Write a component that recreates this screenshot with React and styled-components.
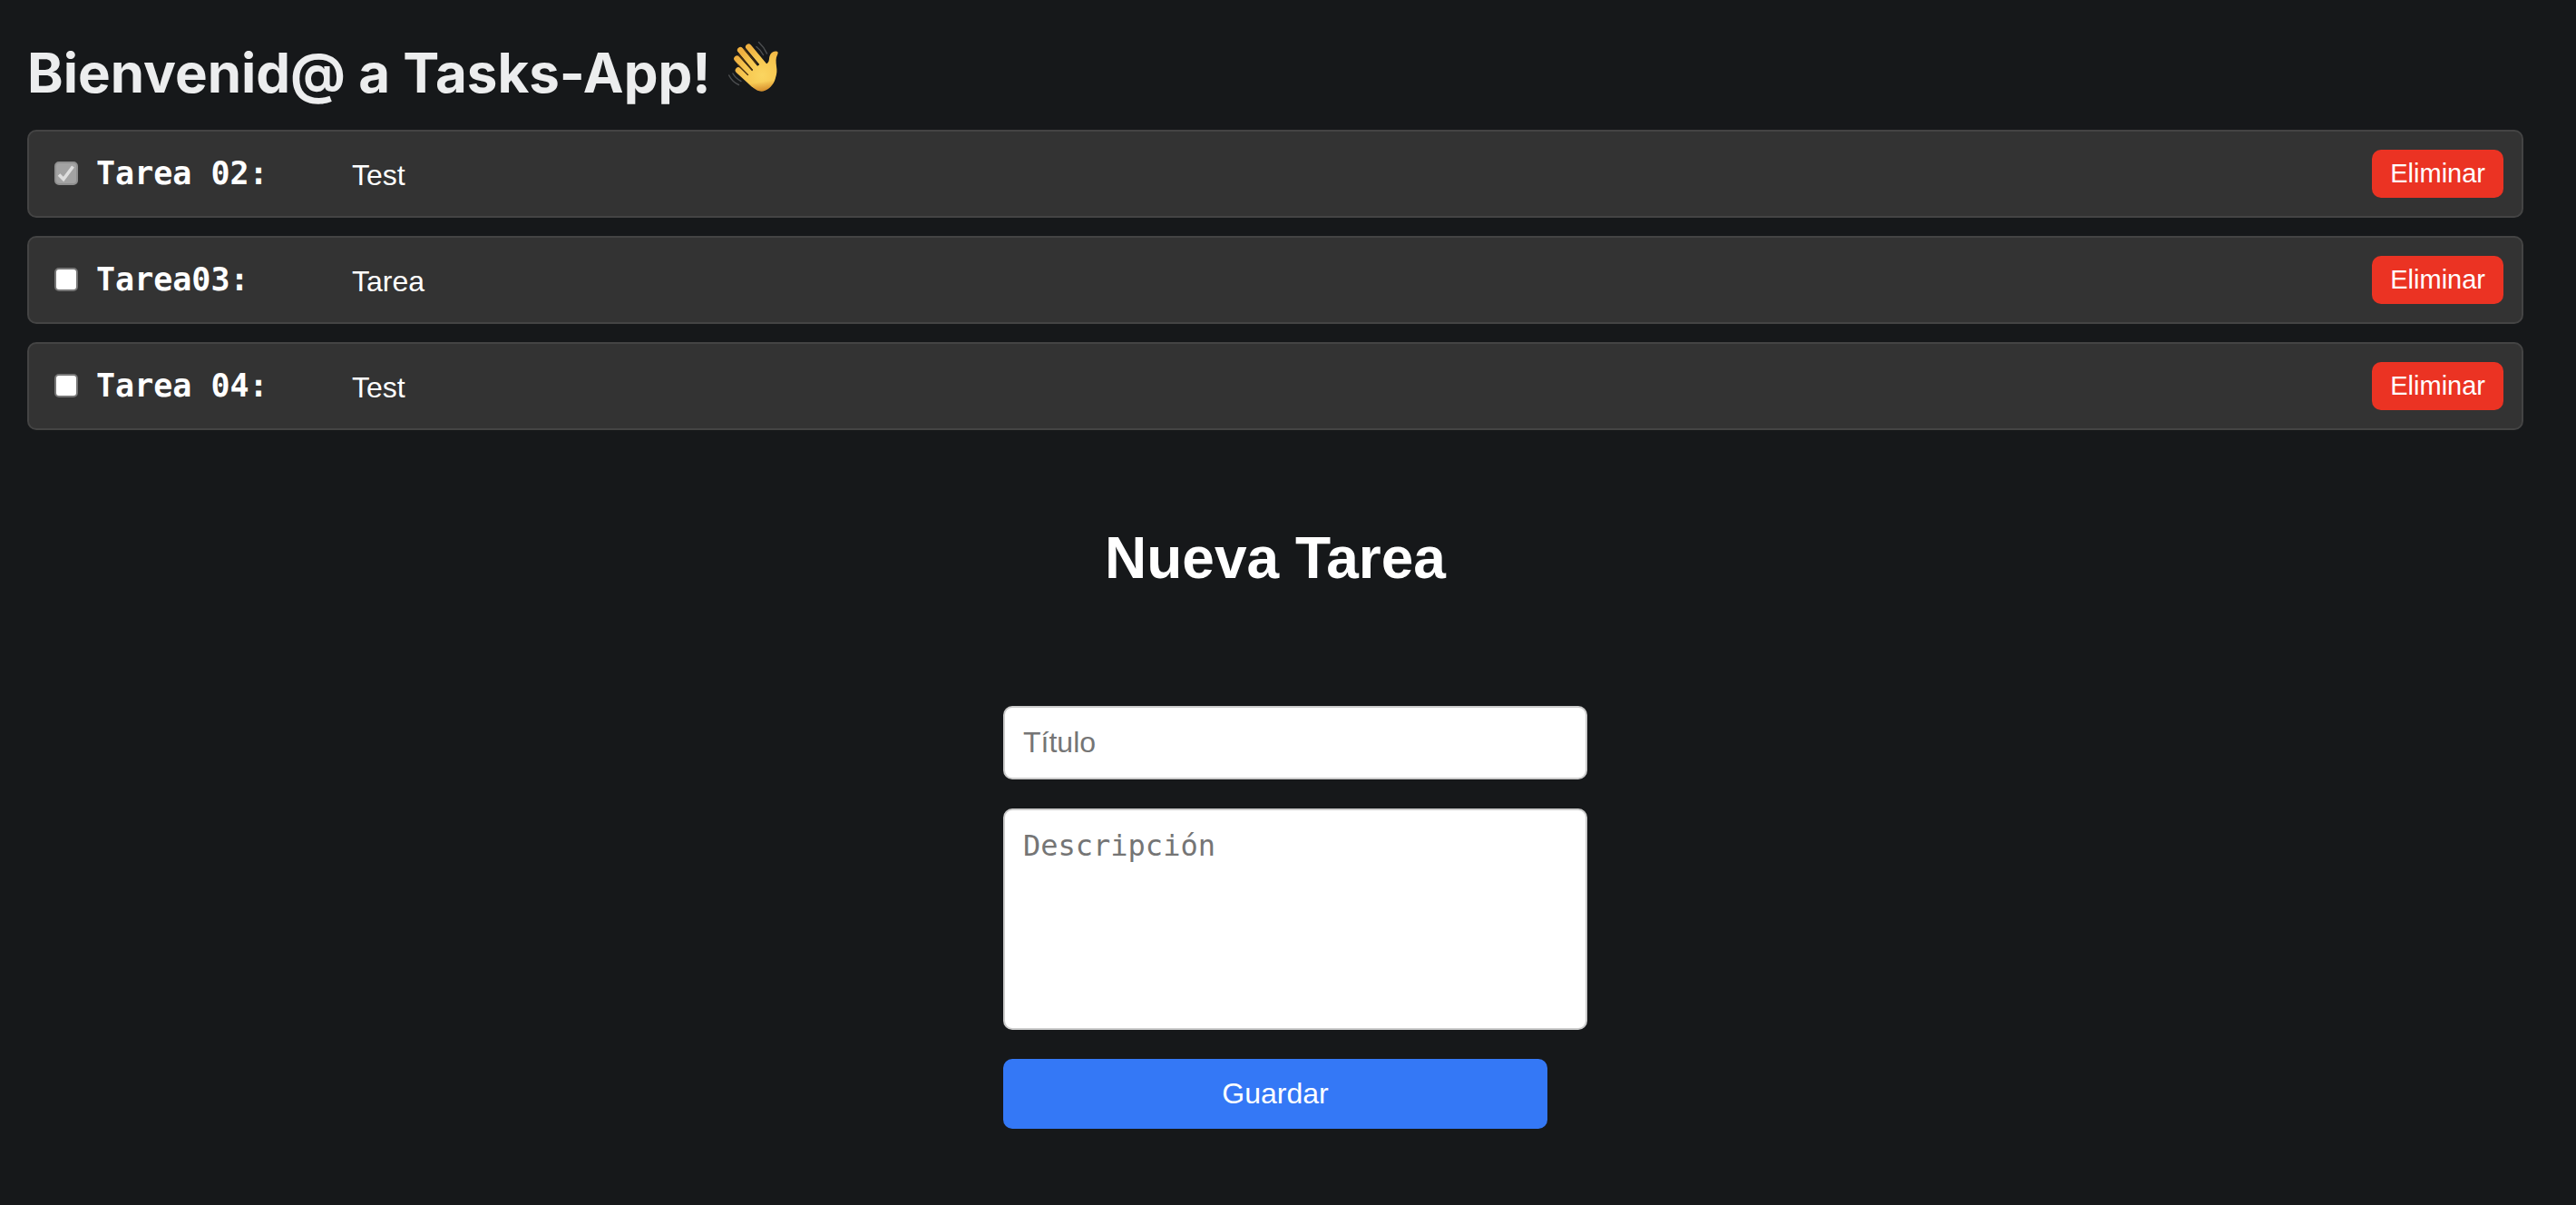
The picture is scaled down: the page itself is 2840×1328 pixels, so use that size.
import React, { useState } from "react";
import styled, { createGlobalStyle } from "styled-components";

const GlobalStyle = createGlobalStyle`
  *, *::before, *::after { box-sizing: border-box; }
  body {
    margin: 0;
    background: #16181a;
    color: #fff;
    font-family: "Liberation Sans", Arial, Helvetica, sans-serif;
    font-size: 32px;
  }
`;

const Page = styled.div`
  padding: 38px 58px 84px 30px;
`;

const Welcome = styled.h1`
  display: flex;
  align-items: center;
  gap: 18px;
  margin: 0 0 20px;
  color: #ecedee;
  font-family: Inter, sans-serif;
  font-size: 60px;
  font-weight: 700;
  line-height: 85px;
`;

const WaveIcon = styled.svg`
  width: 58px;
  height: 58px;
  margin-bottom: 14px;
`;

const TaskList = styled.ul`
  display: flex;
  flex-direction: column;
  gap: 20px;
  margin: 0;
  padding: 0;
  list-style: none;
`;

const TaskRow = styled.li`
  display: flex;
  align-items: center;
  padding: 20px 20px 20px 28px;
  background: #333;
  border: 2px solid #444;
  border-radius: 10px;
`;

const Check = styled.input`
  appearance: none;
  flex: none;
  width: 26px;
  height: 26px;
  margin: 0 20px 1px 0;
  background: #fff;
  border: 2px solid #767676;
  border-radius: 5px;

  &:checked {
    border-color: #909090;
    background: #a3a3a3
      url("data:image/svg+xml,%3Csvg xmlns='http://www.w3.org/2000/svg' viewBox='0 0 22 22'%3E%3Cpath d='M3 12.500L8 17.500L18.500 3.500' fill='none' stroke='%23dedede' stroke-width='3.600'/%3E%3C/svg%3E")
      center / 22px 22px no-repeat;
  }
`;

const TaskTitle = styled.label`
  width: 282px;
  font-family: "DejaVu Sans Mono", monospace;
  font-size: 35px;
  font-weight: 700;
  line-height: 53px;
`;

const TaskText = styled.p`
  flex: 1;
  margin: 0;
  padding-top: 2px;
  line-height: 36px;
`;

const Button = styled.button`
  border: 0;
  border-radius: 10px;
  color: #fff;
  font-family: inherit;
  cursor: pointer;
`;

const DeleteButton = styled(Button)`
  padding: 10px 20px;
  background: #eb3323;
  font-size: 29px;
  line-height: 33px;
`;

const FormTitle = styled.h2`
  margin: 104px 0 0;
  font-size: 64px;
  font-weight: 700;
  line-height: 74px;
  text-align: center;
`;

const Form = styled.form`
  display: flex;
  flex-direction: column;
  gap: 32px;
  width: 100%;
  max-width: 600px;
  margin: 126px auto 0;
`;

const Field = styled.input`
  display: block;
  width: calc(100% + 44px);
  padding: 20px;
  background: #fff;
  border: 2px solid #ccc;
  border-radius: 10px;
  color: #16181a;
  font-family: inherit;
  font-size: 32px;
  line-height: 37px;

  &::placeholder { color: #757575; opacity: 1; }
`;

const DescriptionField = styled(Field)`
  height: 244px;
  font-family: "DejaVu Sans Mono", monospace;
  line-height: 39px;
  resize: none;
`;

const SaveButton = styled(Button)`
  padding: 20px;
  background: #3478f6;
  font-size: 32px;
  line-height: 37px;
`;

function Wave() {
  return (
    <WaveIcon viewBox="0 0 58 58" role="img" aria-label="wave">
      <defs>
        <radialGradient id="skin" gradientUnits="userSpaceOnUse" cx="38" cy="38" r="34">
          <stop offset="0" stopColor="#fad560" />
          <stop offset="0.6" stopColor="#f7c64f" />
          <stop offset="1" stopColor="#efb040" />
        </radialGradient>
        <linearGradient id="shade" x1="0.5" y1="0" x2="0.7" y2="1">
          <stop offset="0.6" stopColor="#c9761d" stopOpacity="0" />
          <stop offset="1" stopColor="#c9761d" stopOpacity="0.75" />
        </linearGradient>
      </defs>
      <g fill="none" stroke="#4c4e50" strokeWidth="1.500" strokeLinecap="round">
        <path d="M34.500 1.500Q40 6.500 43.500 14" />
        <path d="M32 6.500Q36.500 10 39.500 15.500" />
        <path d="M6 36Q9 41.500 15 44.500" />
        <path d="M1.700 38Q5.500 45.500 12.500 48.500" />
      </g>
      <g stroke="url(#skin)" strokeWidth="6.600" strokeLinecap="round" fill="none">
        <path d="M23.300 6.700L42 29" />
        <path d="M14.200 10.200L34 34" />
        <path d="M10.500 19.800L29 40" />
        <path d="M12 32.500L29 48" />
      </g>
      <g fill="none" stroke="#4a3010" strokeWidth="1.400" strokeLinecap="round">
        <path d="M18.500 9L32 25" />
        <path d="M12.500 15.500L27.500 32.500" />
        <path d="M11.500 26.500L22.500 37.500" />
      </g>
      <path
        d="M26 35L29 31L38 24C42 27 45.500 25.500 46 20C46.300 15 49 11 54 11.500C56 11.800 56 13.500 55 15.500C53 19 53.500 23 54 28C54.800 33 54.500 36 53 41C51 49 44 55.500 37.500 55.500C33 55.500 28.500 52 25 48.500L17 40L24 38Z"
        fill="url(#skin)"
      />
      <path
        d="M16 39L25 48.500C28.500 52 33 55.500 37.500 55.500C44 55.500 51 49 53 41C54.500 36 54.800 33 54 28C51 42 39 48 27 46Z"
        fill="url(#shade)"
      />
    </WaveIcon>
  );
}

const initialTasks = [
  { id: "t2", title: "Tarea 02:", text: "Test", done: true },
  { id: "t3", title: "Tarea03:", text: "Tarea", done: false },
  { id: "t4", title: "Tarea 04:", text: "Test", done: false },
];

export default function App() {
  const [tasks, setTasks] = useState(initialTasks);
  const toggle = (id) =>
    setTasks((list) => list.map((t) => (t.id === id ? { ...t, done: !t.done } : t)));
  const remove = (id) => setTasks((list) => list.filter((t) => t.id !== id));

  return (
    <Page>
      <GlobalStyle />
      <Welcome>
        Bienvenid@ a Tasks-App! <Wave />
      </Welcome>
      <TaskList>
        {tasks.map((t) => (
          <TaskRow key={t.id}>
            <Check id={t.id} type="checkbox" checked={t.done} onChange={() => toggle(t.id)} />
            <TaskTitle htmlFor={t.id}>{t.title}</TaskTitle>
            <TaskText>{t.text}</TaskText>
            <DeleteButton type="button" onClick={() => remove(t.id)}>
              Eliminar
            </DeleteButton>
          </TaskRow>
        ))}
      </TaskList>
      <FormTitle>Nueva Tarea</FormTitle>
      <Form onSubmit={(e) => e.preventDefault()}>
        <Field type="text" placeholder="Título" aria-label="Título" />
        <DescriptionField as="textarea" placeholder="Descripción" aria-label="Descripción" />
        <SaveButton type="submit">Guardar</SaveButton>
      </Form>
    </Page>
  );
}
